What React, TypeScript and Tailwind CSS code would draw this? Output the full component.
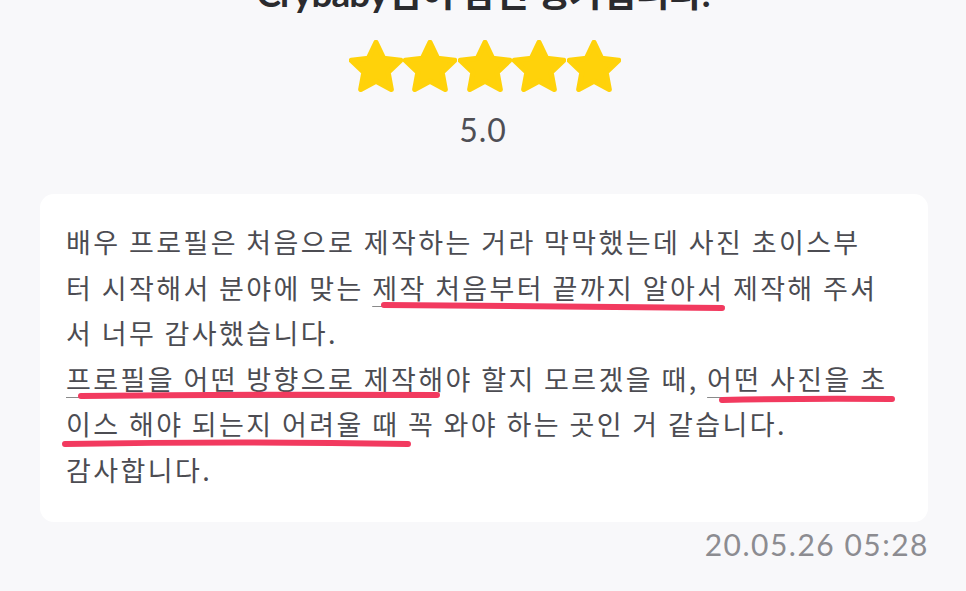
import React from 'react';

const Star: React.FC = () => (
  <svg width="54" height="54" viewBox="2.1 1.7 19.8 19.8" className="shrink-0">
    <path
      d="M12 2.6l2.75 5.78 6.3.8-4.62 4.38 1.17 6.25L12 16.77l-5.6 3.04 1.17-6.25L2.95 9.18l6.3-.8z"
      fill="#ffd20a"
      stroke="#ffd20a"
      strokeWidth="1.9"
      strokeLinejoin="round"
    />
  </svg>
);

const mark = 'underline decoration-[#8a8a8a] decoration-1 underline-offset-[7px]';

const App: React.FC = () => {
  return (
    <div className="w-[966px] h-[591px] overflow-hidden bg-[#f8f8fa] flex flex-col items-center font-['Noto_Sans_CJK_KR',sans-serif]">
      {/* Title, cut off by the top edge */}
      <h1 className="mt-[-27px] text-[37px] leading-[40px] font-bold text-[#2b2b2e] tracking-tight font-['Lato','Noto_Sans_CJK_KR',sans-serif]">
        Crybaby님이 남긴 평가입니다.
      </h1>

      {/* Rating */}
      <div className="mt-[27px] flex items-center gap-[0.5px] ml-[3px]">
        <Star />
        <Star />
        <Star />
        <Star />
        <Star />
      </div>
      <div className="mt-[18px] text-[32px] leading-[36px] tracking-[1px] text-[#4f4f55] font-['Lato',sans-serif]">5.0</div>

      {/* Review card */}
      <div className="relative mt-[46px] w-[888px] self-start ml-[40px] bg-white rounded-[14px] pl-[26px] pt-[25px] pb-[30px] text-[27px] leading-[45.5px] tracking-[2.4px] text-[#4c4c52]">
        <p>배우 프로필은 처음으로 제작하는 거라 막막했는데 사진 초이스부</p>
        <p>
          터 시작해서 분야에 맞는 <span className={mark}>제작 처음부터 끝까지 알아서</span> 제작해 주셔
        </p>
        <p>서 너무 감사했습니다.</p>
        <p>
          <span className={mark}>프로필을 어떤 방향으로 제작</span>해야 할지 모르겠을 때,{' '}
          <span className={mark}>어떤 사진을 초</span>
        </p>
        <p>
          <span className={mark}>이스 해야 되는지 어려울 때</span> 꼭 와야 하는 곳인 거 같습니다.
        </p>
        <p>감사합니다.</p>

        {/* Hand-drawn highlighter strokes */}
        <svg className="absolute inset-0 pointer-events-none" width="888" height="325">
          <g fill="none" stroke="#f23a5f" strokeWidth="6" strokeLinecap="round">
            <path d="M344 111 Q500 113 682 114" />
            <path d="M41 202 Q220 200 397 201" />
            <path d="M682 206 Q770 204 852 205" />
            <path d="M25 250 Q200 247 368 250" />
          </g>
        </svg>
      </div>

      {/* Timestamp */}
      <div className="self-end mr-[37px] mt-[4px] text-[30px] leading-[36px] text-[#8c8c91] tracking-[1.5px] font-['Lato',sans-serif]">
        20.05.26 05:28
      </div>
    </div>
  );
};

export default App;
